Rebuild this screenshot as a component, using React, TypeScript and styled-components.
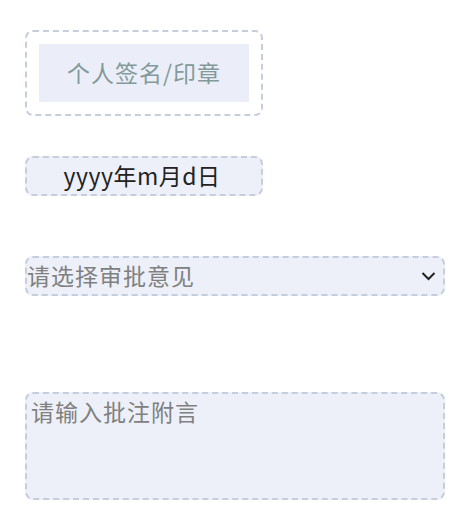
import styled, { createGlobalStyle } from "styled-components";

const GlobalStyle = createGlobalStyle`
  body {
    margin: 0;
    background: #fff;
    font-family: "Noto Sans CJK SC", "Noto Sans", sans-serif;
  }
`;

const Page = styled.div`
  padding: 30px 28px 0 25px;
  display: flex;
  flex-direction: column;
`;

const Field = styled.div<{ $top?: number }>`
  margin-top: ${(p) => p.$top ?? 0}px;
`;

const SignBox = styled.div`
  width: 238px;
  height: 86px;
  box-sizing: border-box;
  border: 2px dashed #c6cddb;
  border-radius: 8px;
  padding: 12px;
`;

const SignInner = styled.div`
  height: 100%;
  background: #ebeef8;
  display: flex;
  align-items: center;
  justify-content: center;
  color: #829a9a;
  font-size: 23px;
  letter-spacing: 1px;
  padding-bottom: 3px;
  box-sizing: border-box;
`;

const DateBox = styled.div`
  width: 238px;
  height: 40px;
  box-sizing: border-box;
  border: 2px dashed #c6cddb;
  border-radius: 8px;
  background: #edf0f9;
  display: flex;
  align-items: center;
  justify-content: center;
  color: #222;
  font-size: 23px;
  letter-spacing: 0.5px;
  padding: 0 4px 2px 0;
`;

const Select = styled.div`
  width: 420px;
  height: 40px;
  box-sizing: border-box;
  border: 2px dashed #c6cddb;
  border-radius: 8px;
  background: #edf0f9;
  display: flex;
  align-items: center;
  justify-content: space-between;
  padding: 0 7px 3px 0;
  color: #808080;
  font-size: 23px;
  letter-spacing: 1px;
`;

const TextArea = styled.textarea`
  display: block;
  width: 420px;
  height: 108px;
  box-sizing: border-box;
  border: 2px dashed #c6cddb;
  border-radius: 8px;
  background: #edf0f9;
  padding: 0 4px;
  resize: none;
  font-family: "Noto Sans CJK SC", "Noto Sans", sans-serif;
  font-size: 23px;
  letter-spacing: 1px;
  color: #333;

  &::placeholder {
    color: #808080;
  }
`;

const Chevron = () => (
  <svg width="15" height="10" viewBox="0 0 15 10" style={{ marginTop: 3 }}>
    <path d="M1.5 2 L7.5 8 L13.5 2" fill="none" stroke="#222" strokeWidth="2" />
  </svg>
);

const App = () => (
  <>
    <GlobalStyle />
    <Page>
      <Field>
        <SignBox>
          <SignInner>个人签名/印章</SignInner>
        </SignBox>
      </Field>
      <Field $top={40}>
        <DateBox>yyyy年m月d日</DateBox>
      </Field>
      <Field $top={60}>
        <Select>
          <span>请选择审批意见</span>
          <Chevron />
        </Select>
      </Field>
      <Field $top={96}>
        <TextArea placeholder="请输入批注附言" />
      </Field>
    </Page>
  </>
);

export default App;
